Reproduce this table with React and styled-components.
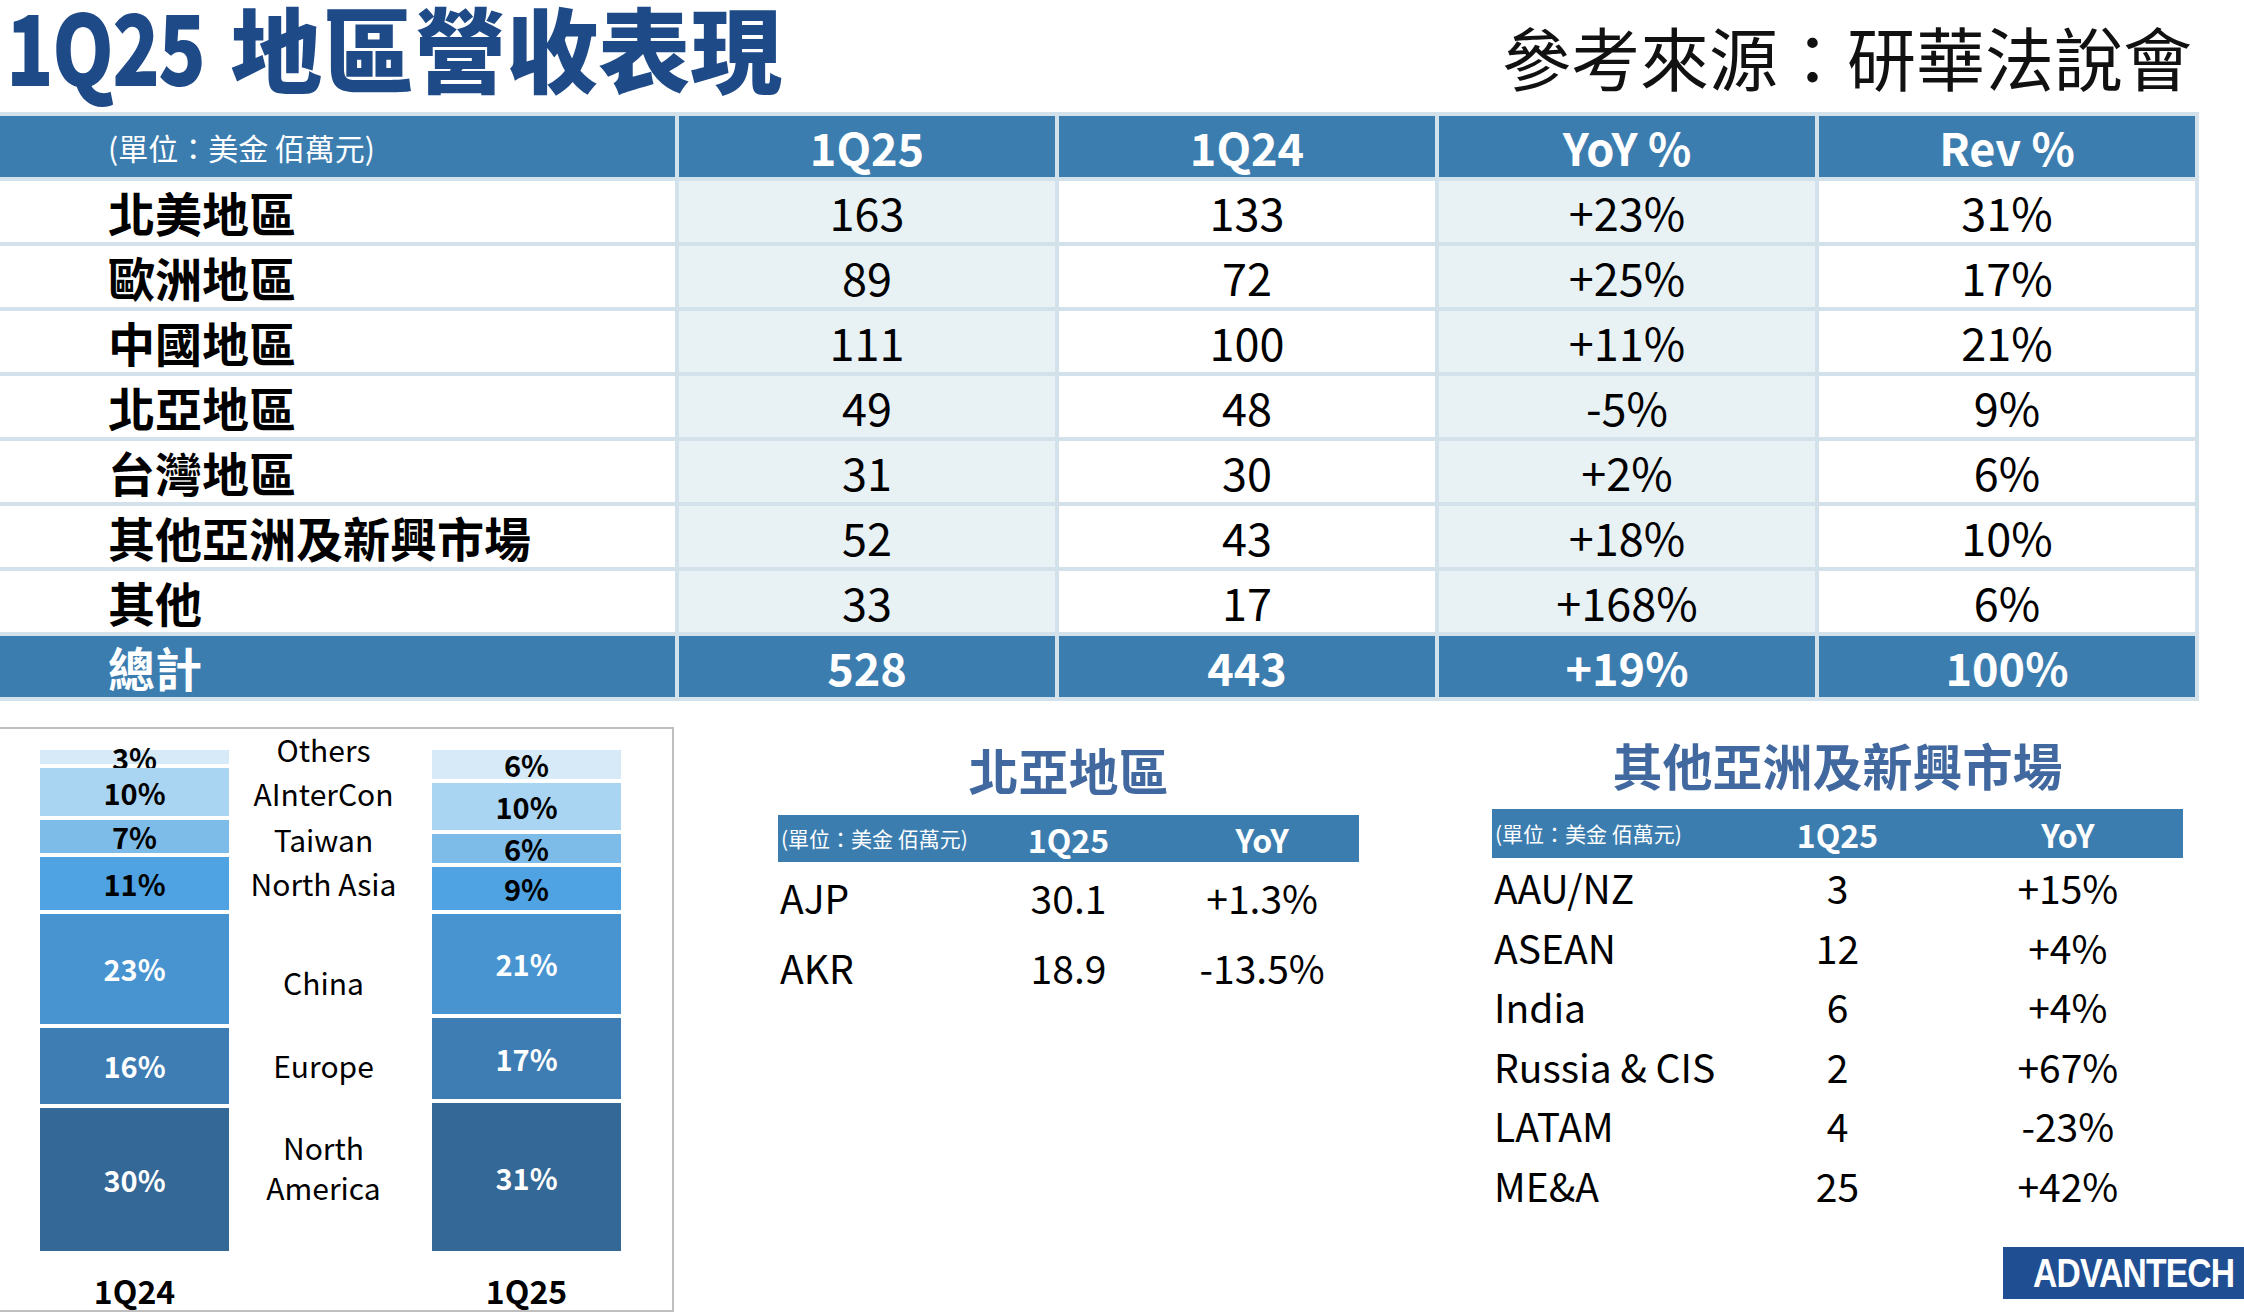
import React from 'react'
import styled, { createGlobalStyle } from 'styled-components'

const FONT = `"Noto Sans CJK TC", "Noto Sans", sans-serif`

const mainRows = [
  ['北美地區', '163', '133', '+23%', '31%'],
  ['歐洲地區', '89', '72', '+25%', '17%'],
  ['中國地區', '111', '100', '+11%', '21%'],
  ['北亞地區', '49', '48', '-5%', '9%'],
  ['台灣地區', '31', '30', '+2%', '6%'],
  ['其他亞洲及新興市場', '52', '43', '+18%', '10%'],
  ['其他', '33', '17', '+168%', '6%'],
]

const bars = [
  { name: '1Q24', segs: [3, 10, 7, 11, 23, 16, 30] },
  { name: '1Q25', segs: [6, 10, 6, 9, 21, 17, 31] },
]

const segColors = ['#d6eaf7', '#aad5f2', '#7dbce8', '#4fa3e2', '#4794d1', '#3d7db3', '#336897']

const legend = [
  { text: 'Others', mt: 0 },
  { text: 'AInterCon', mt: 4 },
  { text: 'Taiwan', mt: 6 },
  { text: 'North Asia', mt: 4 },
  { text: 'China', mt: 59 },
  { text: 'Europe', mt: 43 },
  { text: 'North\nAmerica', mt: 42 },
]

const northAsia = [
  ['AJP', '30.1', '+1.3%'],
  ['AKR', '18.9', '-13.5%'],
]

const otherAsia = [
  ['AAU/NZ', '3', '+15%'],
  ['ASEAN', '12', '+4%'],
  ['India', '6', '+4%'],
  ['Russia & CIS', '2', '+67%'],
  ['LATAM', '4', '-23%'],
  ['ME&A', '25', '+42%'],
]

const App = () => {
  return (
    <Page>
      <GlobalStyle />
      <TopBar>
        <Title><TitleNum>1Q25</TitleNum> 地區營收表現</Title>
        <Source>參考來源：研華法說會</Source>
      </TopBar>

      <MainTable>
        <Cell $tone="head" $align="left"><Unit>(單位：美金 佰萬元)</Unit></Cell>
        <Cell $tone="head">1Q25</Cell>
        <Cell $tone="head">1Q24</Cell>
        <Cell $tone="head">YoY %</Cell>
        <Cell $tone="head">Rev %</Cell>
        {mainRows.map(row => (
          <React.Fragment key={row[0]}>
            <Cell $align="left"><RegionName>{row[0]}</RegionName></Cell>
            <Cell $tone="light">{row[1]}</Cell>
            <Cell>{row[2]}</Cell>
            <Cell $tone="light">{row[3]}</Cell>
            <Cell>{row[4]}</Cell>
          </React.Fragment>
        ))}
        <Cell $tone="total" $align="left"><RegionName>總計</RegionName></Cell>
        <Cell $tone="total">528</Cell>
        <Cell $tone="total">443</Cell>
        <Cell $tone="total">+19%</Cell>
        <Cell $tone="total">100%</Cell>
      </MainTable>

      <BottomArea>
        <ChartPanel>
          <Bar $col={1}>
            {bars[0].segs.map((p, i) => (
              <Segment key={i} $pct={p} $color={segColors[i]} $light={i < 4}>{p}%</Segment>
            ))}
          </Bar>
          <Legend>
            {legend.map(l => (
              <LegendItem key={l.text} $mt={l.mt}>{l.text}</LegendItem>
            ))}
          </Legend>
          <Bar $col={3}>
            {bars[1].segs.map((p, i) => (
              <Segment key={i} $pct={p} $color={segColors[i]} $light={i < 4}>{p}%</Segment>
            ))}
          </Bar>
          <AxisLabel $col={1}>{bars[0].name}</AxisLabel>
          <AxisLabel $col={3}>{bars[1].name}</AxisLabel>
        </ChartPanel>

        <MiddleSection>
          <SectionTitle $pt={17} $mb={21}>北亞地區</SectionTitle>
          <SmallHead $h={47}>
            <HeadUnit>(單位：美金 佰萬元)</HeadUnit>
            <HeadCol>1Q25</HeadCol>
            <HeadCol>YoY</HeadCol>
          </SmallHead>
          {northAsia.map(r => (
            <SmallRow key={r[0]} $h={70}>
              <RowName>{r[0]}</RowName>
              <RowVal>{r[1]}</RowVal>
              <RowVal>{r[2]}</RowVal>
            </SmallRow>
          ))}
        </MiddleSection>

        <RightSection>
          <RightTable>
            <SectionTitle $pt={12} $mb={20}>其他亞洲及新興市場</SectionTitle>
            <SmallHead $h={49}>
              <HeadUnit>(單位：美金 佰萬元)</HeadUnit>
              <HeadCol>1Q25</HeadCol>
              <HeadCol>YoY</HeadCol>
            </SmallHead>
            {otherAsia.map(r => (
              <SmallRow key={r[0]} $h={59.5}>
                <RowName>{r[0]}</RowName>
                <RowVal>{r[1]}</RowVal>
                <RowVal>{r[2]}</RowVal>
              </SmallRow>
            ))}
          </RightTable>
          <Logo><LogoText>ADVANTECH</LogoText></Logo>
        </RightSection>
      </BottomArea>
    </Page>
  )
}

const GlobalStyle = createGlobalStyle`
  html, body {
    margin: 0;
    padding: 0;
    background: #ffffff;
  }
  * {
    box-sizing: border-box;
  }
`

const Page = styled.div`
  width: 2244px;
  height: 1312px;
  overflow: hidden;
  background: #ffffff;
  display: flex;
  flex-direction: column;
  font-family: ${FONT};
  color: #000000;
`

const TopBar = styled.div`
  height: 113px;
  display: flex;
  justify-content: space-between;
  align-items: flex-start;
  padding: 0 52px 0 6px;
`

const Title = styled.h1`
  margin: -6px 0 0;
  font-size: 92px;
  font-weight: 900;
  line-height: 1;
  color: #1e4a88;
  white-space: nowrap;
`

const TitleNum = styled.span`
  display: inline-block;
  font-size: 98px;
  letter-spacing: -2px;
  transform: scaleX(0.8);
  transform-origin: left center;
  margin-right: -45px;
`

const Source = styled.div`
  margin-top: 22px;
  font-size: 69px;
  font-weight: 400;
  line-height: 1;
  color: #111111;
`

const MainTable = styled.div`
  display: grid;
  grid-template-columns: 675px repeat(4, 376px);
  grid-auto-rows: 61px;
  gap: 4px;
  padding: 4px 4px 4px 0;
  width: 2199px;
  background: #d3e1ea;
`

const toneBg = {
  head: '#3c7db0',
  total: '#3c7db0',
  light: '#e8f1f4',
  plain: '#ffffff',
}

const Cell = styled.div`
  display: flex;
  align-items: center;
  justify-content: ${p => (p.$align === 'left' ? 'flex-start' : 'center')};
  padding-left: ${p => (p.$align === 'left' ? '108px' : '0')};
  background: ${p => toneBg[p.$tone || 'plain']};
  color: ${p => (p.$tone === 'head' || p.$tone === 'total' ? '#ffffff' : '#000000')};
  font-size: 45px;
  font-weight: ${p => (p.$tone === 'head' || p.$tone === 'total' ? 700 : 400)};
  line-height: 1;
`

const Unit = styled.span`
  font-size: 30px;
  font-weight: 400;
`

const RegionName = styled.span`
  font-size: 47px;
  font-weight: 700;
`

const BottomArea = styled.div`
  margin-top: 26px;
  flex: 1;
  display: flex;
  align-items: stretch;
`

const ChartPanel = styled.div`
  width: 674px;
  flex: none;
  border: 2px solid #bfbfbf;
  border-left: none;
  display: grid;
  grid-template-columns: 189px 203px 189px;
  grid-template-rows: auto auto;
  align-content: start;
  padding-left: 40px;
`

const Bar = styled.div`
  grid-column: ${p => p.$col};
  grid-row: 1;
  margin-top: 21px;
  height: 501px;
  display: flex;
  flex-direction: column;
  gap: 4px;
`

const Segment = styled.div`
  flex: ${p => p.$pct} 1 0;
  min-height: 0;
  display: flex;
  align-items: center;
  justify-content: center;
  background: ${p => p.$color};
  color: ${p => (p.$light ? '#000000' : '#ffffff')};
  font-size: 29px;
  font-weight: 700;
  line-height: 1;
`

const Legend = styled.div`
  grid-column: 2;
  grid-row: 1;
  display: flex;
  flex-direction: column;
  align-items: center;
  padding-right: 14px;
`

const LegendItem = styled.div`
  margin-top: ${p => p.$mt}px;
  font-size: 30px;
  line-height: 40px;
  text-align: center;
  white-space: pre-line;
`

const AxisLabel = styled.div`
  grid-column: ${p => p.$col};
  grid-row: 2;
  margin-top: 19px;
  text-align: center;
  font-size: 32px;
  font-weight: 700;
  line-height: 40px;
`

const MiddleSection = styled.div`
  margin-left: 104px;
  width: 581px;
  flex: none;
  display: flex;
  flex-direction: column;
`

const SectionTitle = styled.div`
  padding-top: ${p => p.$pt}px;
  margin-bottom: ${p => p.$mb}px;
  text-align: center;
  font-size: 50px;
  font-weight: 700;
  line-height: 1;
  color: #42699f;
`

const SmallHead = styled.div`
  height: ${p => p.$h}px;
  display: grid;
  grid-template-columns: repeat(3, 1fr);
  align-items: center;
  background: #3c7db0;
  color: #ffffff;
`

const HeadUnit = styled.div`
  padding-left: 3px;
  font-size: 21px;
  line-height: 1;
  white-space: nowrap;
`

const HeadCol = styled.div`
  text-align: center;
  font-size: 32px;
  font-weight: 700;
  line-height: 1;
`

const SmallRow = styled.div`
  height: ${p => p.$h}px;
  display: grid;
  grid-template-columns: repeat(3, 1fr);
  align-items: center;
  font-size: 39px;
  line-height: 1;
`

const RowName = styled.div`
  padding-left: 2px;
  white-space: nowrap;
`

const RowVal = styled.div`
  text-align: center;
`

const RightSection = styled.div`
  margin-left: 133px;
  flex: 1;
  display: flex;
  flex-direction: column;
`

const RightTable = styled.div`
  width: 691px;
  display: flex;
  flex-direction: column;
`

const Logo = styled.div`
  margin-top: auto;
  margin-bottom: 13px;
  align-self: flex-end;
  width: 241px;
  height: 52px;
  padding-left: 30px;
  display: flex;
  align-items: center;
  background: #1f4e92;
  color: #ffffff;
  overflow: hidden;
`

const LogoText = styled.span`
  display: inline-block;
  font-family: "Liberation Sans", Arial, sans-serif;
  font-size: 41px;
  font-weight: 700;
  letter-spacing: -1px;
  line-height: 1;
  white-space: nowrap;
  transform: scaleX(0.82);
  transform-origin: left center;
`

export default App
